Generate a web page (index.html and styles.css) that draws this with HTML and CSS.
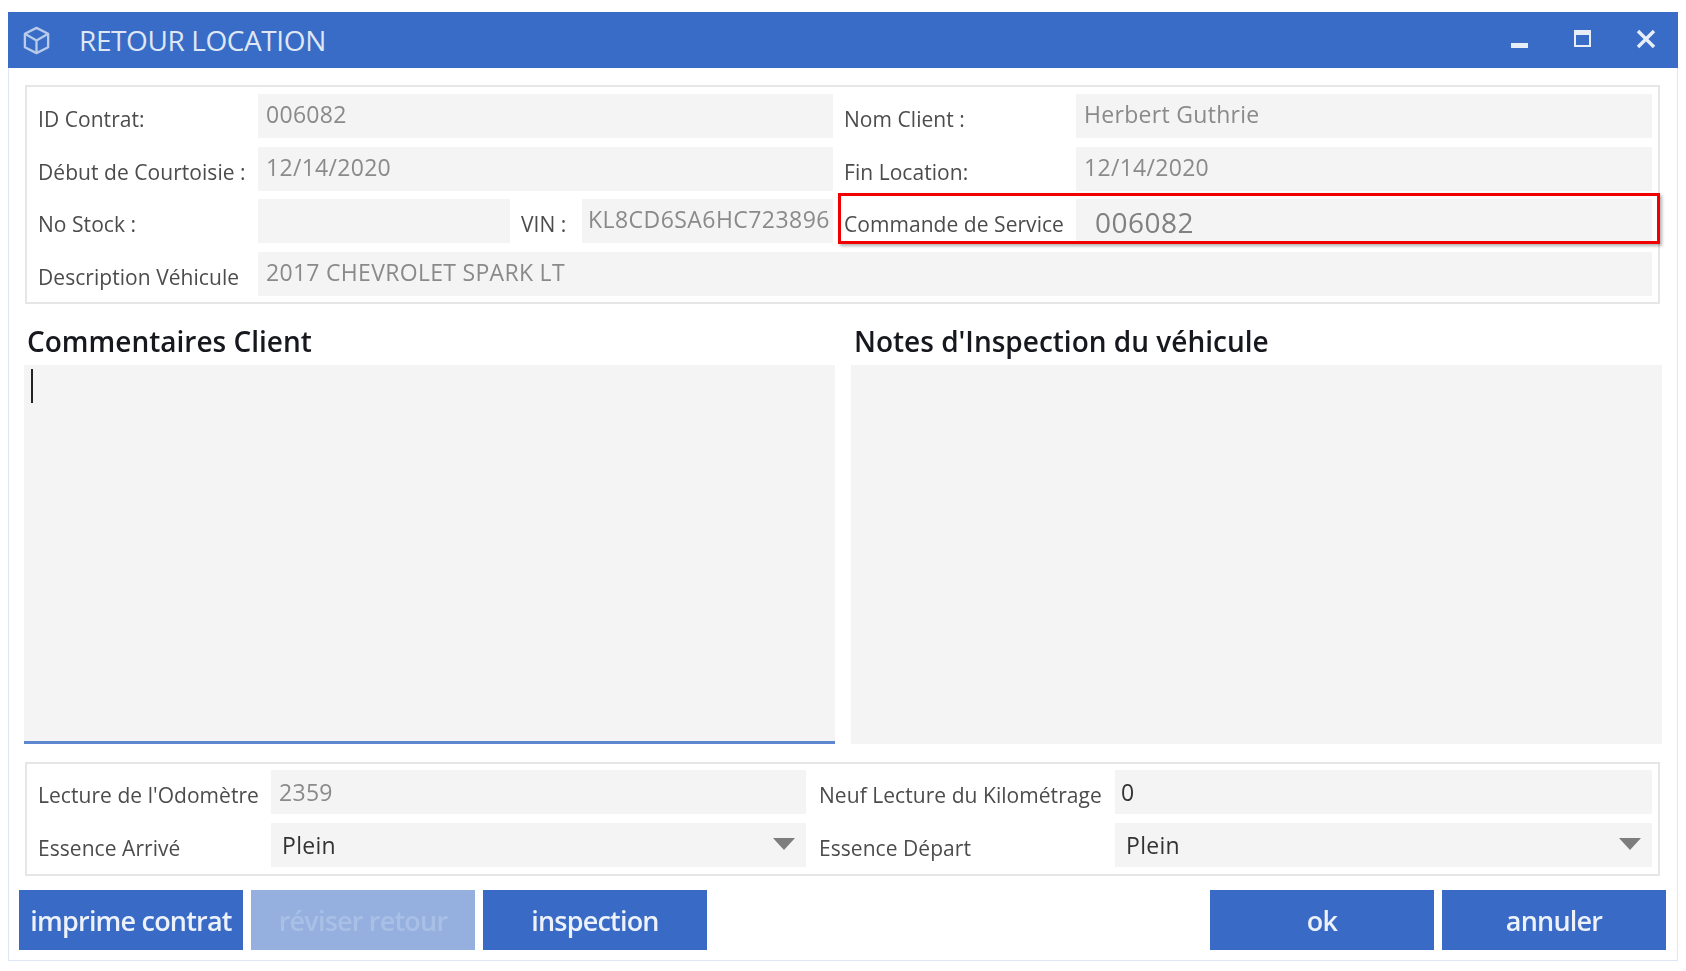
FILE: index.html
```html
<!DOCTYPE html>
<html lang="fr">
<head>
<meta charset="utf-8">
<title>Retour Location</title>
<link rel="stylesheet" href="styles.css">
</head>
<body>
<div class="window">
  <header class="titlebar">
    <svg class="cube" viewBox="0 0 32 32" fill="none" stroke="currentColor" stroke-width="2.4" stroke-linejoin="round"><path d="M16 3 28 9v14l-12 6-12-6V9z"/><path d="M4 9l12 7 12-7M16 16v13"/></svg>
    <h1 class="title">RETOUR LOCATION</h1>
    <div class="controls">
      <svg class="ctl" viewBox="0 0 20 20"><rect x="1" y="14" width="17" height="5" fill="currentColor"/></svg>
      <svg class="ctl" viewBox="0 0 20 20" fill="none" stroke="currentColor"><rect x="2" y="2" width="15" height="15" stroke-width="2"/><path d="M2 4h15" stroke-width="4"/></svg>
      <svg class="ctl" viewBox="0 0 20 20" fill="none" stroke="currentColor" stroke-width="3.4"><path d="M2 2l16 16M18 2 2 18"/></svg>
    </div>
  </header>
  <main class="content">
    <section class="panel info">
      <div class="label">ID Contrat:</div>
      <div class="field">006082</div>
      <div class="label right">Nom Client :</div>
      <div class="field">Herbert Guthrie</div>

      <div class="label">Début de Courtoisie :</div>
      <div class="field">12/14/2020</div>
      <div class="label right">Fin Location:</div>
      <div class="field">12/14/2020</div>

      <div class="label">No Stock :</div>
      <div class="stock-row">
        <div class="field stock"></div>
        <div class="label vin">VIN :</div>
        <div class="field vin-value">KL8CD6SA6HC723896</div>
      </div>
      <div class="label right">Commande de Service</div>
      <div class="field service">006082</div>

      <div class="label">Description Véhicule</div>
      <div class="field wide">2017 CHEVROLET SPARK LT</div>
      <div class="highlight"></div>
    </section>

    <section class="notes">
      <div class="note">
        <h2 class="heading">Commentaires Client</h2>
        <div class="notebox active"><span class="caret"></span></div>
      </div>
      <div class="note">
        <h2 class="heading">Notes d'Inspection du véhicule</h2>
        <div class="notebox"></div>
      </div>
    </section>

    <section class="panel odo">
      <div class="label">Lecture de l'Odomètre</div>
      <div class="field">2359</div>
      <div class="label right">Neuf Lecture du Kilométrage</div>
      <div class="field dark tight">0</div>

      <div class="label">Essence Arrivé</div>
      <div class="field dark select">Plein<span class="arrow"></span></div>
      <div class="label right">Essence Départ</div>
      <div class="field dark select">Plein<span class="arrow"></span></div>
    </section>

    <footer class="actions">
      <button class="btn">imprime contrat</button>
      <button class="btn disabled">réviser retour</button>
      <button class="btn">inspection</button>
      <span class="spacer"></span>
      <button class="btn">ok</button>
      <button class="btn">annuler</button>
    </footer>
  </main>
</div>
</body>
</html>
```
FILE: styles.css
```css
* { box-sizing: border-box; }
html, body { margin: 0; padding: 0; background: #fff; }
body {
  font-family: "Open Sans", "Noto Sans", sans-serif;
  color: #555;
  height: 971px;
  overflow: hidden;
  padding: 12px 8px 0;
}
.window {
  width: 1670px;
  height: 949px;
  border: 1px solid #dde7f6;
  border-top: 0;
  filter: blur(0.6px);
}
.titlebar {
  height: 56px;
  margin: 0 -1px;
  background: #386cc6;
  color: #dfe7f5;
  display: flex;
  align-items: center;
  padding-left: 13px;
}
.cube { width: 31px; height: 31px; color: #b9cbe9; }
.title {
  margin: 0 0 0 27px;
  font-size: 28px;
  font-weight: 400;
  letter-spacing: -0.4px;
}
.controls {
  margin-left: auto;
  margin-top: -2px;
  display: flex;
  gap: 43px;
  padding-right: 22px;
  color: #e8eef8;
}
.ctl { width: 20px; height: 20px; }
.content { padding: 17px 15px 0; }
.panel {
  margin: 0 2px 0 1px;
  border: 2px solid #e6e6e6;
  display: grid;
  row-gap: 8px;
  padding: 6px 6px 6px 11px;
  position: relative;
}
.info { grid-template-columns: 220px 575px 243px 1fr; height: 219px; padding-top: 7px; }
.odo { grid-template-columns: 233px 535px 309px 1fr; height: 114px; margin-top: 18px; }
.label {
  font-size: 21px;
  letter-spacing: 0.05px;
  line-height: 44px;
  height: 44px;
  padding-top: 3px;
  white-space: nowrap;
  color: #4c4c4c;
}
.label.right { padding-left: 11px; }
.odo .label.right { padding-left: 13px; }
.field {
  height: 44px;
  background: #f4f4f4;
  font-size: 23px;
  letter-spacing: 0.3px;
  line-height: 40px;
  padding-left: 8px;
  color: #8a8a8a;
  white-space: nowrap;
  overflow: hidden;
}
.odo .field { line-height: 44px; }
.wide { grid-column: 2 / 5; }
.stock-row { display: flex; }
.stock { width: 252px; flex: none; }
.label.vin { width: 72px; padding-left: 11px; flex: none; }
.vin-value { flex: 1; padding-left: 6px; letter-spacing: 0.45px; }
.service { font-size: 28px; line-height: 46px; padding-left: 19px; letter-spacing: 0.5px; color: #808080; }
.highlight {
  position: absolute;
  left: 811px;
  top: 106px;
  width: 822px;
  height: 51px;
  border: 3px solid #f00000;
  box-shadow: 2px 2px 3px rgba(0, 0, 0, 0.3);
}
.notes {
  display: grid;
  grid-template-columns: 811px 811px;
  column-gap: 16px;
}
.heading {
  margin: 0;
  height: 61px;
  padding: 13px 0 0 3px;
  font-size: 28px;
  line-height: 48px;
  font-weight: 600;
  letter-spacing: 0;
  color: #16181d;
  white-space: nowrap;
}
.notebox {
  height: 379px;
  background: #f4f4f4;
  padding: 4px 0 0 7px;
}
.notebox.active { border-bottom: 3px solid #5f87cf; }
.caret { display: block; width: 2px; height: 34px; background: #222; }
.dark { color: #333; }
.tight { padding-left: 6px; }
.select { position: relative; padding-left: 11px; }
.arrow {
  position: absolute;
  right: 11px;
  top: 15px;
  border-left: 11px solid transparent;
  border-right: 11px solid transparent;
  border-top: 12px solid #7d7d7d;
}
.actions { display: flex; gap: 8px; margin: 14px -4px 0 -5px; }
.spacer { flex: 1; }
.btn {
  width: 224px;
  height: 60px;
  border: 0;
  padding: 0;
  background: #386ac6;
  color: #ecf1fa;
  font-family: inherit;
  font-size: 27px;
  font-weight: 600;
  letter-spacing: -0.8px;
}
.btn.disabled { background: #95b0de; color: #a9c0e6; }
```
